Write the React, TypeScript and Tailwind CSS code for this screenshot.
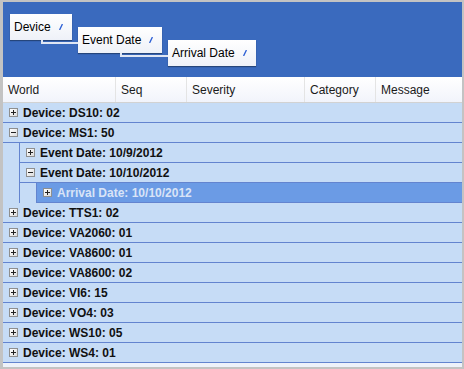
import React from 'react';

const PlusMinus: React.FC<{ open?: boolean }> = ({ open }) => (
  <span className="relative mr-[5px] inline-block h-[9px] w-[9px] shrink-0 border border-[#8e8f8f] bg-gradient-to-br from-white to-[#dcdcdc]">
    <span className="absolute left-[1px] top-[3px] h-[1px] w-[5px] bg-[#222]" />
    {!open && <span className="absolute left-[3px] top-[1px] h-[5px] w-[1px] bg-[#222]" />}
  </span>
);

const Pencil = () => (
  <svg width="4" height="6" viewBox="0 0 4 6" className="shrink-0">
    <path d="M3.2 0.5 L0.8 5.5" stroke="#2f62d6" strokeWidth="1.4" strokeLinecap="round" />
  </svg>
);

interface ChipProps {
  label: string;
  width: string;
  connector?: string;
  offset?: string;
}

const Chip: React.FC<ChipProps> = ({ label, width, connector, offset }) => (
  <div className={`relative flex h-[26px] items-center justify-between bg-gradient-to-b from-white to-[#eef1f8] pl-[4px] pr-[9px] shadow-[0_1px_1px_rgba(0,0,0,0.35)] ${width} ${offset ?? ''}`}>
    {connector && <div className={`absolute top-[13px] h-[4px] border-b-2 border-l-2 border-[#dfe6f4] ${connector}`} />}
    <span className="text-[12px] text-black">{label}</span>
    <Pencil />
  </div>
);

const Row: React.FC<{ label: string; open?: boolean; selected?: boolean }> = ({ label, open, selected }) => (
  <div
    className={`flex h-[20px] items-center border-b border-[#6384cf] pl-[6px] text-[12px] font-bold ${
      selected ? 'bg-[#6b9be5] text-[#d9e4f7]' : 'bg-[#c6dcf6] text-[#111]'
    }`}
  >
    <PlusMinus open={open} />
    <span className="whitespace-nowrap">{label}</span>
  </div>
);

const Nested: React.FC<{ children: React.ReactNode }> = ({ children }) => (
  <div className="bg-[#c6dcf6] pl-[16px]">
    <div className="border-l border-[#6384cf]">{children}</div>
  </div>
);

const columns = [
  { name: 'World', w: 'w-[113px]' },
  { name: 'Seq', w: 'w-[71px]' },
  { name: 'Severity', w: 'w-[118px]' },
  { name: 'Category', w: 'w-[71px]' },
  { name: 'Message', w: 'flex-1' },
];

const devices = ['TTS1: 02', 'VA2060: 01', 'VA8600: 01', 'VA8600: 02', 'VI6: 15', 'VO4: 03', 'WS10: 05', 'WS4: 01'];

export default function App() {
  return (
    <div className="flex h-[369px] w-[464px] flex-col border-b-2 border-l-[3px] border-r-2 border-t-2 border-[#c3c3c3] bg-[#eef2fa] font-['Liberation_Sans',Arial,sans-serif]">
      {/* group by panel */}
      <div className="flex h-[75px] items-start gap-[6px] bg-[#3a6abe] pl-[7px] pt-[12px]">
        <Chip label="Device" width="w-[62px]" />
        <Chip label="Event Date" width="w-[84px]" offset="mt-[13px]" connector="-left-[37px] w-[37px]" />
        <Chip label="Arrival Date" width="w-[88px]" offset="mt-[26px]" connector="-left-[48px] w-[48px]" />
      </div>

      {/* header */}
      <div className="flex h-[26px] border-b border-[#d2d2d2] bg-gradient-to-b from-white to-[#f2f4fb] text-[12px] text-[#1a1a1a]">
        {columns.map((c, i) => (
          <div key={c.name} className={`flex items-center pl-[5px] ${c.w} ${i < columns.length - 1 ? 'border-r border-[#e4e4e4]' : ''}`}>
            {c.name}
          </div>
        ))}
      </div>

      {/* rows */}
      <div>
        <Row label="Device: DS10: 02" />
        <Row label="Device: MS1: 50" open />
        <Nested>
          <Row label="Event Date: 10/9/2012" />
          <Row label="Event Date: 10/10/2012" open />
          <Nested>
            <Row label="Arrival Date: 10/10/2012" selected />
          </Nested>
        </Nested>
        {devices.map((d, i) => (
          <Row key={i} label={`Device: ${d}`} />
        ))}
      </div>
    </div>
  );
}
